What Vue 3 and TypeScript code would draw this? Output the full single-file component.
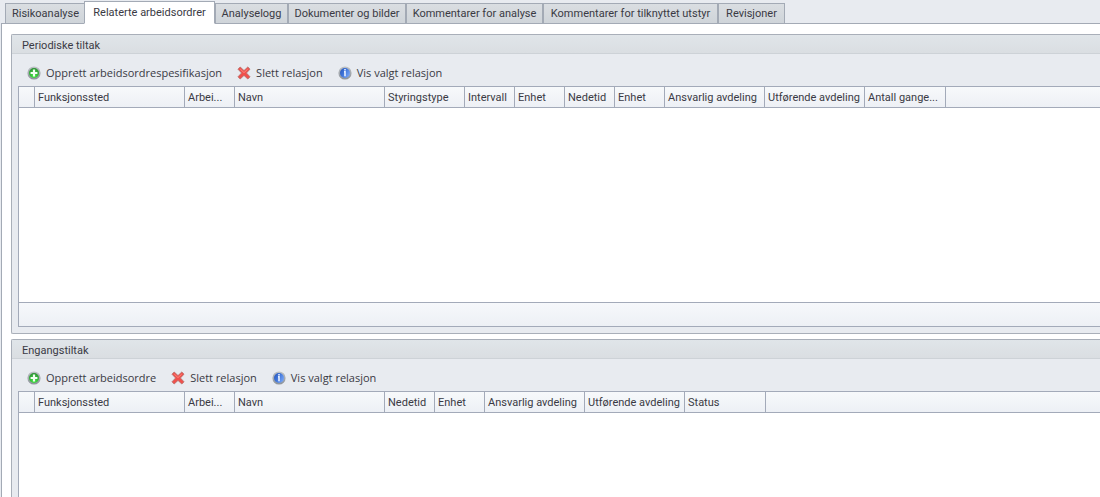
<script setup lang="ts">
import { ref } from 'vue'

interface Column { label: string; width: number }
interface Section { title: string; create: string; columns: Column[]; footer: boolean }

const tabs = [
  { label: 'Risikoanalyse', width: 80 },
  { label: 'Relaterte arbeidsordrer', width: 131 },
  { label: 'Analyselogg', width: 73 },
  { label: 'Dokumenter og bilder', width: 118 },
  { label: 'Kommentarer for analyse', width: 137 },
  { label: 'Kommentarer for tilknyttet utstyr', width: 175 },
  { label: 'Revisjoner', width: 67 },
]
const active = ref(1)

const sections: Section[] = [
  {
    title: 'Periodiske tiltak',
    create: 'Opprett arbeidsordrespesifikasjon',
    footer: true,
    columns: [
      { label: '', width: 16 },
      { label: 'Funksjonssted', width: 150 },
      { label: 'Arbei...', width: 50 },
      { label: 'Navn', width: 150 },
      { label: 'Styringstype', width: 80 },
      { label: 'Intervall', width: 50 },
      { label: 'Enhet', width: 50 },
      { label: 'Nedetid', width: 50 },
      { label: 'Enhet', width: 50 },
      { label: 'Ansvarlig avdeling', width: 100 },
      { label: 'Utførende avdeling', width: 100 },
      { label: 'Antall gange...', width: 81 },
    ],
  },
  {
    title: 'Engangstiltak',
    create: 'Opprett arbeidsordre',
    footer: false,
    columns: [
      { label: '', width: 16 },
      { label: 'Funksjonssted', width: 150 },
      { label: 'Arbei...', width: 50 },
      { label: 'Navn', width: 150 },
      { label: 'Nedetid', width: 50 },
      { label: 'Enhet', width: 50 },
      { label: 'Ansvarlig avdeling', width: 100 },
      { label: 'Utførende avdeling', width: 100 },
      { label: 'Status', width: 81 },
    ],
  },
]
</script>

<template>
  <div class="page">
    <svg class="defs" aria-hidden="true">
      <defs>
        <radialGradient id="green" cx="50%" cy="80%" r="70%">
          <stop offset="0" stop-color="#3fe63f" />
          <stop offset="1" stop-color="#2f9436" />
        </radialGradient>
        <linearGradient id="blue" x1="0" y1="0" x2="1" y2="0.6">
          <stop offset="0" stop-color="#2450b4" />
          <stop offset="0.5" stop-color="#3f74d8" />
          <stop offset="1" stop-color="#7aa8f8" />
        </linearGradient>
        <linearGradient id="rim" x1="0" y1="0" x2="0" y2="1">
          <stop offset="0" stop-color="#bcc0c4" />
          <stop offset="1" stop-color="#8f959c" />
        </linearGradient>
      </defs>
    </svg>

    <nav class="tabs" role="tablist">
      <button
        v-for="(tab, i) in tabs"
        :key="tab.label"
        class="tab"
        :class="{ active: i === active }"
        :style="{ width: tab.width + 'px' }"
        type="button"
        role="tab"
        :aria-selected="i === active"
        @click="active = i"
      >{{ tab.label }}</button>
    </nav>

    <main class="panel">
      <section v-for="s in sections" :key="s.title" class="group" :class="{ fill: !s.footer }">
        <h2 class="title">{{ s.title }}</h2>
        <div class="toolbar">
          <button class="tool" type="button">
            <svg width="14" height="14" viewBox="0 0 14 14" aria-hidden="true">
              <circle cx="7" cy="7" r="5.8" fill="url(#green)" stroke="url(#rim)" stroke-width="1.6" />
              <path d="M7 3.6v6.8M3.6 7h6.8" stroke="#f2fff2" stroke-width="2.2" />
            </svg>
            {{ s.create }}
          </button>
          <button class="tool" type="button">
            <svg width="14" height="14" viewBox="0 0 14 14" aria-hidden="true">
              <path d="M3.2 1 7 4.6 10.8 1 13 3.2 9.4 7 13 10.8 10.8 13 7 9.4 3.2 13 1 10.8 4.6 7 1 3.2z" fill="#f0504c" stroke="#b9706c" stroke-width="0.9" stroke-linejoin="round" />
              <path d="M3.3 3.2 7 6.6l3.7-3.4" fill="none" stroke="#ff8a80" stroke-width="0.9" />
            </svg>
            Slett relasjon
          </button>
          <button class="tool" type="button">
            <svg width="14" height="14" viewBox="0 0 14 14" aria-hidden="true">
              <circle cx="7" cy="7" r="5.8" fill="url(#blue)" stroke="url(#rim)" stroke-width="1.6" />
              <path d="M7 3v1.5M6 5.7h1v4.6" fill="none" stroke="#e8f1ff" stroke-width="1.6" />
            </svg>
            Vis valgt relasjon
          </button>
        </div>
        <div class="grid">
          <table>
            <colgroup>
              <col v-for="(c, i) in s.columns" :key="i" :style="{ width: c.width + 'px' }" />
              <col />
            </colgroup>
            <thead>
              <tr>
                <th v-for="(c, i) in s.columns" :key="i" scope="col">{{ c.label }}</th>
                <td></td>
              </tr>
            </thead>
          </table>
          <div class="rows"></div>
          <div v-if="s.footer" class="footer"></div>
        </div>
      </section>
    </main>
  </div>
</template>

<style>
body {
  margin: 0;
  background: #e8ebf0;
}
</style>

<style scoped>
.page {
  box-sizing: border-box;
  display: flex;
  flex-direction: column;
  height: 100vh;
  padding: 1px 0 0 1px;
  overflow: hidden;
  background: #e8ebf0;
  color: #3a3a44;
  font: 11px/14px Roboto, sans-serif;
}
.defs {
  position: absolute;
  width: 0;
  height: 0;
}
button {
  margin: 0;
  padding: 0;
  color: inherit;
  font: inherit;
  white-space: nowrap;
}
.tabs {
  display: flex;
  align-items: flex-end;
  height: 23px;
  padding-left: 4px;
  margin-bottom: -1px;
  z-index: 1;
}
.tab {
  flex: none;
  box-sizing: border-box;
  height: 21px;
  padding-top: 1px;
  border: 1px solid #a3aab5;
  background: linear-gradient(#dadee2, #cfd4d9);
}
.tab:first-child {
  border-right: 0;
  margin-right: -1px;
}
.tab.active {
  height: 23px;
  border-bottom-color: #fff;
  background: #fff;
}
.panel {
  flex: 1;
  display: flex;
  flex-direction: column;
  gap: 5px;
  min-height: 0;
  padding: 10px 0 0 9px;
  border: solid #a3aab5;
  border-width: 1px 0 0 1px;
  background: #fff;
}
.group {
  display: flex;
  flex-direction: column;
  padding-bottom: 6px;
  border: 1px solid #a9afb9;
  border-right: 0;
  border-radius: 2px 0 0 2px;
  background: #e8ebf0;
}
.group.fill {
  flex: 1;
  padding-bottom: 0;
  border-bottom: 0;
}
.title {
  height: 18px;
  margin: 0;
  padding-left: 10px;
  border-bottom: 1px solid #cdd2d7;
  background: linear-gradient(#e0e5e9, #dadee2);
  font-size: 11px;
  font-weight: 400;
  line-height: 21px;
}
.toolbar {
  display: flex;
  align-items: center;
  gap: 15px;
  height: 32px;
  padding: 5px 0 0 15px;
  box-sizing: border-box;
  font-family: "Open Sans", sans-serif;
  line-height: 16px;
}
.tool {
  display: flex;
  align-items: center;
  gap: 5px;
  border: 0;
  background: none;
}
.grid {
  flex: 1;
  display: flex;
  flex-direction: column;
  margin-left: 6px;
  border: solid #a3aab9;
  border-width: 1px 0 0 1px;
  background: #fff;
}
table {
  width: 100%;
  table-layout: fixed;
  border-collapse: separate;
  border-spacing: 0;
}
th,
td {
  box-sizing: border-box;
  height: 21px;
  padding: 1px 0 0 3px;
  border-bottom: 1px solid #a3aab9;
  background: linear-gradient(#f7f9fb, #edf0f5);
  font-weight: 400;
  text-align: left;
  white-space: nowrap;
}
th {
  border-right: 1px solid #a3aab9;
}
.rows {
  flex: 1;
  min-height: 194px;
}
.footer {
  height: 23px;
  border: solid #a3aab9;
  border-width: 1px 0;
  background: linear-gradient(#f6f8fb, #edf0f5);
}
</style>
